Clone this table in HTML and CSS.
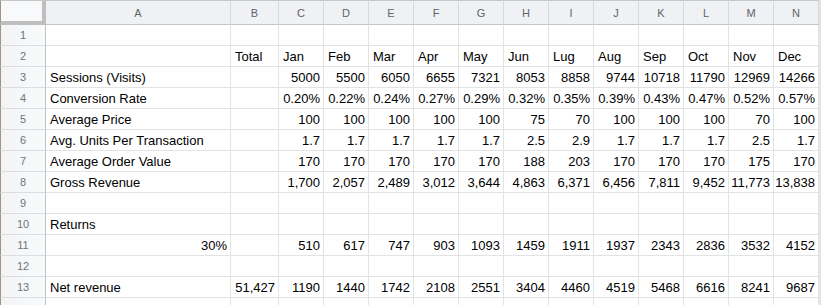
FILE: index.html
```html
<!DOCTYPE html>
<html lang="en">
<head>
<meta charset="utf-8">
<title>Sheet</title>
<link rel="stylesheet" href="styles.css">
</head>
<body>
<div class="sheet">
  <div class="corner"></div>
  <div class="ch">A</div><div class="ch">B</div><div class="ch">C</div><div class="ch">D</div><div class="ch">E</div><div class="ch">F</div><div class="ch">G</div><div class="ch">H</div><div class="ch">I</div><div class="ch">J</div><div class="ch">K</div><div class="ch">L</div><div class="ch">M</div><div class="ch">N</div>

  <div class="rh">1</div>
  <div class="c"></div><div class="c"></div><div class="c"></div><div class="c"></div><div class="c"></div><div class="c"></div><div class="c"></div><div class="c"></div><div class="c"></div><div class="c"></div><div class="c"></div><div class="c"></div><div class="c"></div><div class="c"></div>

  <div class="rh">2</div>
  <div class="c"></div><div class="c">Total</div><div class="c">Jan</div><div class="c">Feb</div><div class="c">Mar</div><div class="c">Apr</div><div class="c">May</div><div class="c">Jun</div><div class="c">Lug</div><div class="c">Aug</div><div class="c">Sep</div><div class="c">Oct</div><div class="c">Nov</div><div class="c">Dec</div>

  <div class="rh">3</div>
  <div class="c">Sessions (Visits)</div><div class="c"></div><div class="c n">5000</div><div class="c n">5500</div><div class="c n">6050</div><div class="c n">6655</div><div class="c n">7321</div><div class="c n">8053</div><div class="c n">8858</div><div class="c n">9744</div><div class="c n">10718</div><div class="c n">11790</div><div class="c n">12969</div><div class="c n">14266</div>

  <div class="rh">4</div>
  <div class="c">Conversion Rate</div><div class="c"></div><div class="c n">0.20%</div><div class="c n">0.22%</div><div class="c n">0.24%</div><div class="c n">0.27%</div><div class="c n">0.29%</div><div class="c n">0.32%</div><div class="c n">0.35%</div><div class="c n">0.39%</div><div class="c n">0.43%</div><div class="c n">0.47%</div><div class="c n">0.52%</div><div class="c n">0.57%</div>

  <div class="rh">5</div>
  <div class="c">Average Price</div><div class="c"></div><div class="c n">100</div><div class="c n">100</div><div class="c n">100</div><div class="c n">100</div><div class="c n">100</div><div class="c n">75</div><div class="c n">70</div><div class="c n">100</div><div class="c n">100</div><div class="c n">100</div><div class="c n">70</div><div class="c n">100</div>

  <div class="rh">6</div>
  <div class="c">Avg. Units Per Transaction</div><div class="c"></div><div class="c n">1.7</div><div class="c n">1.7</div><div class="c n">1.7</div><div class="c n">1.7</div><div class="c n">1.7</div><div class="c n">2.5</div><div class="c n">2.9</div><div class="c n">1.7</div><div class="c n">1.7</div><div class="c n">1.7</div><div class="c n">2.5</div><div class="c n">1.7</div>

  <div class="rh">7</div>
  <div class="c">Average Order Value</div><div class="c"></div><div class="c n">170</div><div class="c n">170</div><div class="c n">170</div><div class="c n">170</div><div class="c n">170</div><div class="c n">188</div><div class="c n">203</div><div class="c n">170</div><div class="c n">170</div><div class="c n">170</div><div class="c n">175</div><div class="c n">170</div>

  <div class="rh">8</div>
  <div class="c">Gross Revenue</div><div class="c"></div><div class="c n">1,700</div><div class="c n">2,057</div><div class="c n">2,489</div><div class="c n">3,012</div><div class="c n">3,644</div><div class="c n">4,863</div><div class="c n">6,371</div><div class="c n">6,456</div><div class="c n">7,811</div><div class="c n">9,452</div><div class="c n">11,773</div><div class="c n">13,838</div>

  <div class="rh">9</div>
  <div class="c"></div><div class="c"></div><div class="c"></div><div class="c"></div><div class="c"></div><div class="c"></div><div class="c"></div><div class="c"></div><div class="c"></div><div class="c"></div><div class="c"></div><div class="c"></div><div class="c"></div><div class="c"></div>

  <div class="rh">10</div>
  <div class="c">Returns</div><div class="c"></div><div class="c"></div><div class="c"></div><div class="c"></div><div class="c"></div><div class="c"></div><div class="c"></div><div class="c"></div><div class="c"></div><div class="c"></div><div class="c"></div><div class="c"></div><div class="c"></div>

  <div class="rh">11</div>
  <div class="c n">30%</div><div class="c"></div><div class="c n">510</div><div class="c n">617</div><div class="c n">747</div><div class="c n">903</div><div class="c n">1093</div><div class="c n">1459</div><div class="c n">1911</div><div class="c n">1937</div><div class="c n">2343</div><div class="c n">2836</div><div class="c n">3532</div><div class="c n">4152</div>

  <div class="rh">12</div>
  <div class="c"></div><div class="c"></div><div class="c"></div><div class="c"></div><div class="c"></div><div class="c"></div><div class="c"></div><div class="c"></div><div class="c"></div><div class="c"></div><div class="c"></div><div class="c"></div><div class="c"></div><div class="c"></div>

  <div class="rh">13</div>
  <div class="c">Net revenue</div><div class="c n">51,427</div><div class="c n">1190</div><div class="c n">1440</div><div class="c n">1742</div><div class="c n">2108</div><div class="c n">2551</div><div class="c n">3404</div><div class="c n">4460</div><div class="c n">4519</div><div class="c n">5468</div><div class="c n">6616</div><div class="c n">8241</div><div class="c n">9687</div>

  <div class="rh"></div>
  <div class="c"></div><div class="c"></div><div class="c"></div><div class="c"></div><div class="c"></div><div class="c"></div><div class="c"></div><div class="c"></div><div class="c"></div><div class="c"></div><div class="c"></div><div class="c"></div><div class="c"></div><div class="c"></div>
</div>
</body>
</html>
```

FILE: styles.css
```css
html, body {
  margin: 0;
  padding: 0;
  background: #ffffff;
}

body {
  font-family: "Liberation Sans", Arial, sans-serif;
  font-size: 13px;
  color: #000000;
  overflow: hidden;
}

.sheet {
  display: grid;
  grid-template-columns: 46px 185px 48px repeat(12, 45px);
  grid-template-rows: 25px repeat(14, 21px);
  width: 819px;
  border-right: 2px solid #e2e3e3;
}

.corner {
  box-sizing: border-box;
  background: #f8f9fa;
  border-top: 1px solid #c7c7c7;
  border-left: 1px solid #a39383;
  border-right: 4px solid #bfbfbf;
  border-bottom: 4px solid #bfbfbf;
}

.ch {
  box-sizing: border-box;
  background: #eff1f4;
  border-top: 1px solid #c7c7c7;
  border-right: 1px solid #d6d8db;
  border-bottom: 1px solid #c4c4c4;
  color: #5f6368;
  font-size: 11px;
  display: flex;
  align-items: center;
  justify-content: center;
  padding-top: 1px;
}

.rh {
  box-sizing: border-box;
  background: linear-gradient(to right, #f3f4f6, #f9fafb);
  border-left: 1px solid #a39383;
  border-right: 1px solid #c4c4c4;
  border-bottom: 1px solid #dcdde0;
  color: #70757a;
  font-size: 11px;
  display: flex;
  align-items: center;
  justify-content: center;
}

.c {
  box-sizing: border-box;
  border-right: 1px solid #e2e3e3;
  border-bottom: 1px solid #e2e3e3;
  padding: 1px 3px 0 4px;
  display: flex;
  align-items: center;
  white-space: nowrap;
  overflow: visible;
  line-height: 15px;
}

.n {
  justify-content: flex-end;
}
```
